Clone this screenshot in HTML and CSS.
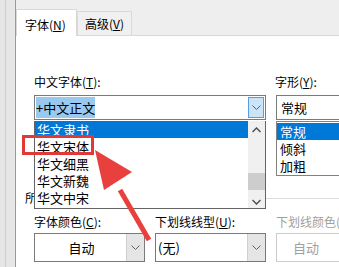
FILE: index.html
```html
<!DOCTYPE html>
<html lang="zh-CN">
<head>
    <meta charset="UTF-8">
    <meta name="viewport" content="width=device-width, initial-scale=1.0">
    <title>字体</title>
    <link rel="stylesheet" href="styles.css">
</head>
<body>
    <div class="dialog">
        <!-- Faixa lateral da janela -->
        <div class="strip"><span class="strip-line"></span></div>

        <div class="panel">
            <!-- Abas -->
            <div class="tabs">
                <div class="tab active">字体(<u>N</u>)</div>
                <div class="tab">高级(<u>V</u>)</div>
            </div>

            <div class="content">
                <div class="top-row">
                    <div class="col-font">
                        <div class="label">中文字体(<u>T</u>):</div>
                        <div class="combo">
                            <span class="combo-text"><span class="sel-text">+中文正文</span></span>
                            <span class="combo-btn focus">
                                <svg width="9" height="6" viewBox="0 0 9 6"><path d="M0.5 0.5 L4.5 4.5 L8.5 0.5" fill="none" stroke="#606060" stroke-width="1"/></svg>
                            </span>
                            <!-- Lista suspensa aberta -->
                            <div class="dropdown">
                                <div class="items">
                                    <div class="item selected">华文隶书</div>
                                    <div class="item">华文宋体</div>
                                    <div class="item">华文细黑</div>
                                    <div class="item">华文新魏</div>
                                    <div class="item">华文中宋</div>
                                </div>
                                <div class="scrollbar">
                                    <svg class="arr" width="9" height="6" viewBox="0 0 9 6"><path d="M0.5 5 L4.5 1 L8.5 5" fill="none" stroke="#505050" stroke-width="1.5"/></svg>
                                    <div class="thumb"></div>
                                    <svg class="arr" width="9" height="6" viewBox="0 0 9 6"><path d="M0.5 1 L4.5 5 L8.5 1" fill="none" stroke="#505050" stroke-width="1.5"/></svg>
                                </div>
                            </div>
                        </div>
                    </div>
                    <div class="col-style">
                        <div class="label">字形(<u>Y</u>):</div>
                        <div class="style-box">常规</div>
                        <div class="style-list">
                            <div class="item selected">常规</div>
                            <div class="item">倾斜</div>
                            <div class="item">加粗</div>
                        </div>
                    </div>
                </div>

                <div class="group-title"><span>所有文字</span><span class="rule"></span></div>

                <div class="bottom-row">
                    <div class="field">
                        <div class="label">字体颜色(<u>C</u>):</div>
                        <div class="select">
                            <span class="select-text center">自动</span>
                            <span class="select-btn">
                                <svg width="9" height="6" viewBox="0 0 9 6"><path d="M0.5 0.5 L4.5 4.5 L8.5 0.5" fill="none" stroke="#606060" stroke-width="1"/></svg>
                            </span>
                        </div>
                    </div>
                    <div class="field">
                        <div class="label">下划线线型(<u>U</u>):</div>
                        <div class="select">
                            <span class="select-text">(无)</span>
                            <span class="select-btn">
                                <svg width="9" height="6" viewBox="0 0 9 6"><path d="M0.5 0.5 L4.5 4.5 L8.5 0.5" fill="none" stroke="#606060" stroke-width="1"/></svg>
                            </span>
                        </div>
                    </div>
                    <div class="field disabled">
                        <div class="label">下划线颜色(<u>I</u>):</div>
                        <div class="select">
                            <span class="select-text center">自动</span>
                        </div>
                    </div>
                </div>
            </div>
        </div>
    </div>

    <!-- Marcação vermelha sobre a captura -->
    <div class="mark-box"></div>
    <svg class="mark-arrow" width="339" height="267" viewBox="0 0 339 267">
        <path d="M149 240 L120 190" stroke="#e8403c" stroke-width="5" fill="none"/>
        <polygon points="95,150 132,172 104,190" fill="#e8403c"/>
    </svg>
</body>
</html>
```

FILE: styles.css
```css
body {
    margin: 0;
    width: 339px;
    height: 267px;
    overflow: hidden;
    background: #fff;
    font-family: "Noto Sans CJK SC", "Microsoft YaHei", sans-serif;
    font-size: 12px;
    color: #000;
    position: relative;
}
u {
    text-decoration: underline;
    text-underline-offset: 1px;
}
.dialog {
    display: flex;
    height: 267px;
}
.strip {
    width: 15px;
    flex-shrink: 0;
    background: #e6e6e6;
    border-right: 1px solid #9a9a9a;
    position: relative;
}
.strip-line {
    position: absolute;
    left: 5px;
    top: 0;
    bottom: 0;
    width: 1px;
    background: #b8d8d0;
}
.panel {
    flex: 1;
    min-width: 0;
    overflow: hidden;
    display: flex;
    flex-direction: column;
}
.tabs {
    height: 35px;
    flex-shrink: 0;
    background: #eeeeee;
    border-bottom: 1px solid #d9d9d9;
    display: flex;
    align-items: flex-end;
}
.tab {
    height: 24px;
    width: 55px;
    box-sizing: border-box;
    border: 1px solid #d9d9d9;
    border-bottom: none;
    background: #f0f0f0;
    padding-left: 7px;
    line-height: 24px;
    white-space: nowrap;
}
.tab.active {
    height: 27px;
    width: 61px;
    margin-bottom: -1px;
    background: #fff;
    padding-left: 8px;
    line-height: 29px;
}
.content {
    padding: 38px 0 0 18px;
}
.top-row {
    display: flex;
    gap: 9px;
    height: 102px;
}
.label {
    height: 16px;
    line-height: 16px;
    margin-bottom: 5px;
    white-space: nowrap;
}
.col-font {
    width: 232px;
    flex-shrink: 0;
}
.combo {
    position: relative;
    height: 25px;
    box-sizing: border-box;
    border: 1px solid #7a7a7a;
    display: flex;
    align-items: center;
}
.combo-text {
    flex: 1;
    padding-left: 1px;
    font-size: 13px;
}
.sel-text {
    background: #99c9ef;
    padding: 1px 0;
}
.combo-btn {
    width: 16px;
    height: 21px;
    margin-right: 1px;
    box-sizing: border-box;
    display: flex;
    align-items: center;
    justify-content: center;
}
.combo-btn.focus {
    background: #cce4f7;
    border: 1px solid #569de5;
}
.dropdown {
    position: absolute;
    top: 25px;
    left: -1px;
    width: 232px;
    height: 88px;
    box-sizing: border-box;
    border: 1px solid #646464;
    border-top: none;
    background: #fff;
    display: flex;
    overflow: hidden;
}
.items {
    flex: 1;
    margin-top: 0;
    font-size: 13px;
}
.item {
    height: 17px;
    line-height: 17px;
    padding-left: 2px;
    white-space: nowrap;
}
.item.selected {
    background: #0078d7;
    color: #fff;
}
.scrollbar {
    width: 17px;
    background: #f0f0f0;
    display: flex;
    flex-direction: column;
    align-items: center;
    justify-content: space-between;
    padding: 6px 0 3px;
    box-sizing: border-box;
}
.thumb {
    width: 17px;
    height: 17px;
    background: #cdcdcd;
    margin-top: 30px;
}
.col-style {
    flex: 1;
    min-width: 0;
}
.style-box {
    height: 25px;
    line-height: 23px;
    box-sizing: border-box;
    border: 1px solid #7a7a7a;
    border-right: none;
    padding-left: 4px;
    margin-left: 1px;
    font-size: 13px;
}
.style-list {
    margin-top: 1px;
    margin-left: 1px;
    height: 55px;
    box-sizing: border-box;
    border: 1px solid #828282;
    border-right: none;
    padding-top: 1px;
    font-size: 13px;
}
.style-list .item {
    padding-left: 3px;
}
.group-title {
    display: flex;
    align-items: center;
    margin-left: -9px;
    margin-top: 14px;
    height: 16px;
    line-height: 16px;
    gap: 4px;
}
.rule {
    flex: 1;
    height: 1px;
    background: #dcdcdc;
}
.bottom-row {
    display: flex;
    gap: 10px;
    margin-top: 8px;
}
.field {
    width: 111px;
    flex-shrink: 0;
}
.field .label {
    margin-bottom: 3px;
}
.select {
    height: 29px;
    box-sizing: border-box;
    border: 1px solid #7a7a7a;
    display: flex;
    align-items: stretch;
    font-size: 13px;
}
.select-text {
    flex: 1;
    line-height: 27px;
    padding-left: 2px;
}
.select-text.center {
    text-align: center;
}
.select-btn {
    width: 17px;
    background: #e5e5e5;
    border-left: 1px solid #cfcfcf;
    display: flex;
    align-items: center;
    justify-content: center;
}
.field.disabled {
    flex: 1;
    flex-shrink: 1;
    min-width: 0;
    color: #a0a0a0;
}
.field.disabled .select {
    border-color: #cccccc;
    border-right: none;
}
.field.disabled .select-text {
    padding-right: 6px;
}
.mark-box {
    position: absolute;
    left: 22px;
    top: 135px;
    width: 66px;
    height: 14px;
    border: 3px solid #e03a36;
}
.mark-arrow {
    position: absolute;
    left: 0;
    top: 0;
    pointer-events: none;
}
```
